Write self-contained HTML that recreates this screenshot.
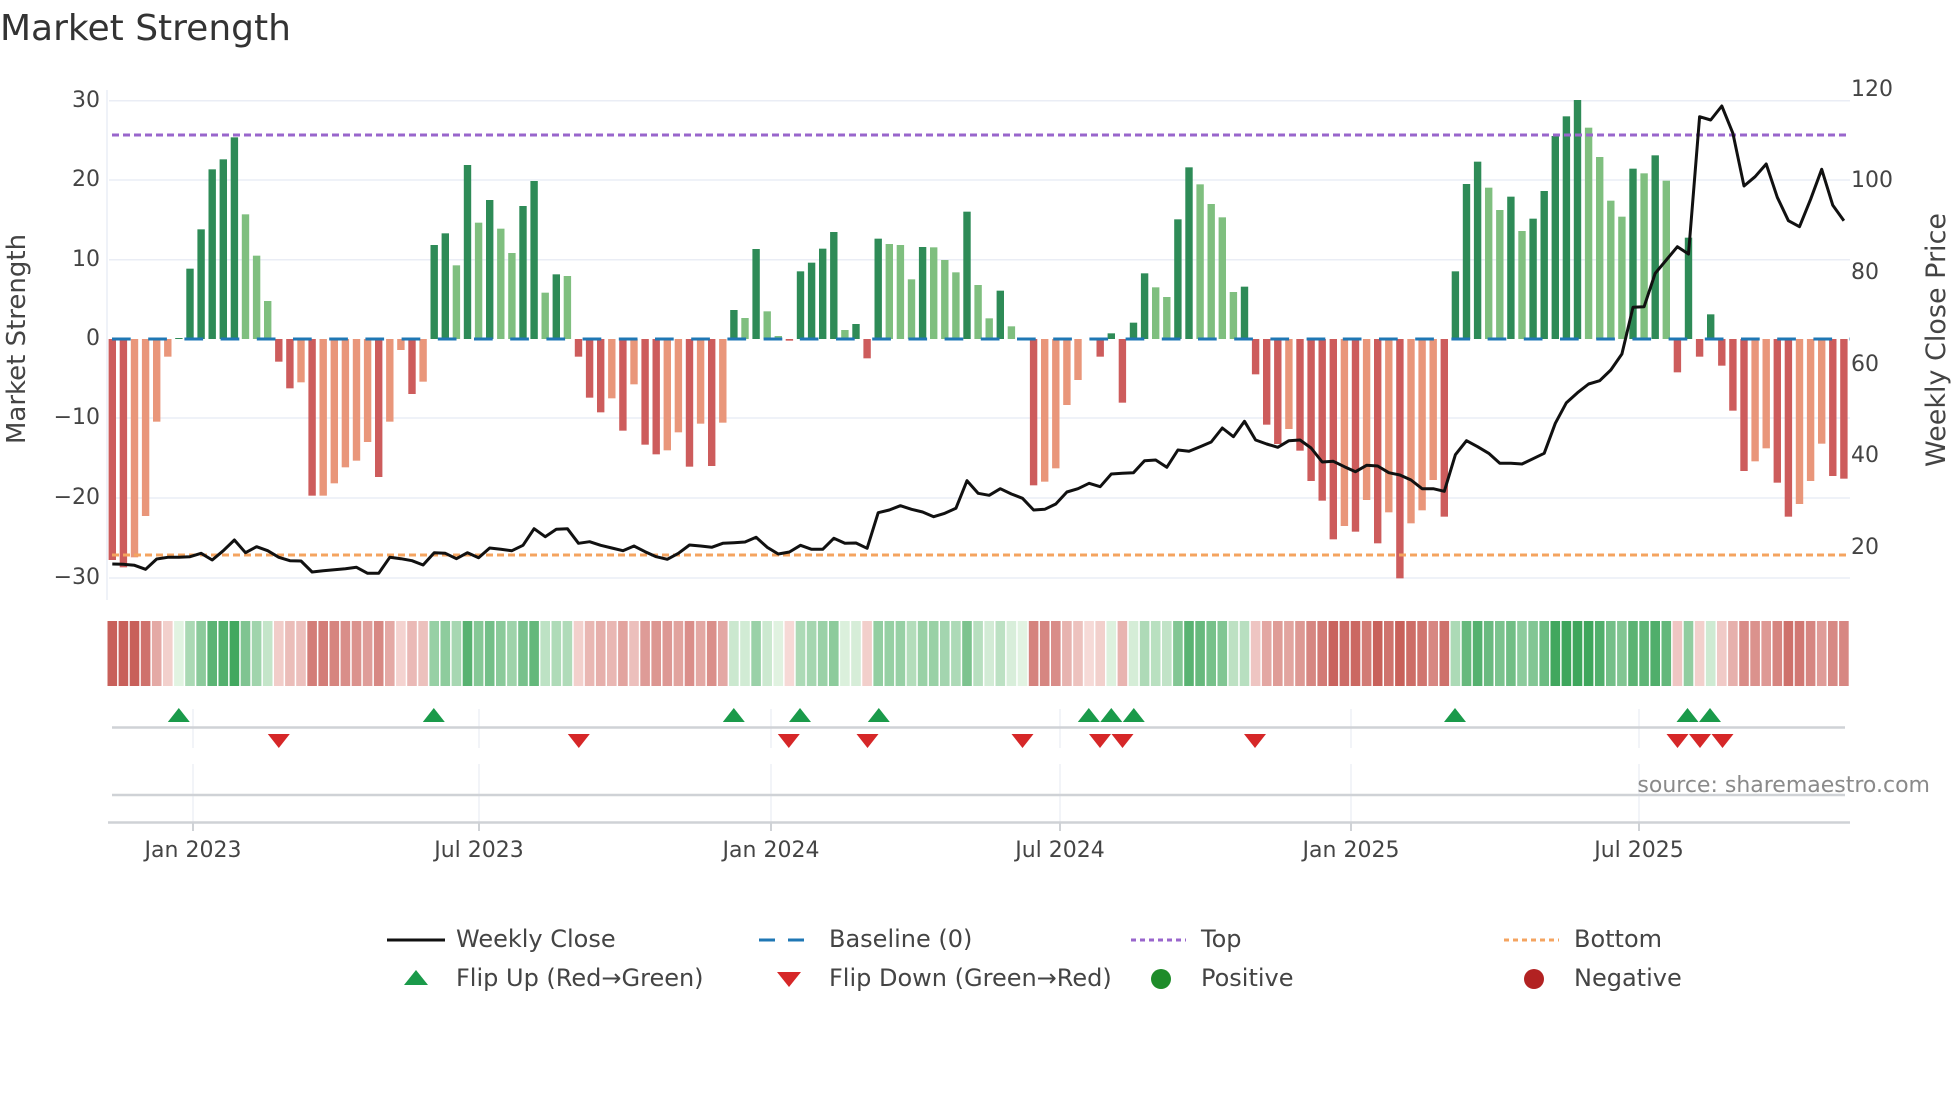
<!DOCTYPE html>
<html><head><meta charset="utf-8"><style>
html,body{margin:0;padding:0;background:#fff;}
svg{display:block;font-family:"DejaVu Sans","Liberation Sans",sans-serif;}
</style></head><body>
<svg id="s" width="1960" height="1102" viewBox="0 0 1960 1102" xmlns="http://www.w3.org/2000/svg">
<rect width="1960" height="1102" fill="#fff"/>
<text x="0" y="40" font-size="36" fill="#333">Market Strength</text>
<g id="grid" stroke="#eaedf5" stroke-width="1.5">
<line x1="109" x2="1850" y1="100.7" y2="100.7"/>
<line x1="109" x2="1850" y1="180" y2="180"/>
<line x1="109" x2="1850" y1="259.7" y2="259.7"/>
<line x1="109" x2="1850" y1="418" y2="418"/>
<line x1="109" x2="1850" y1="498" y2="498"/>
<line x1="109" x2="1850" y1="578" y2="578"/>
<line x1="107" x2="107" y1="90" y2="600"/>
</g>
<g id="bars"></g>
<line x1="112" x2="1850" y1="339" y2="339" stroke="#1f77b4" stroke-width="3" stroke-dasharray="18.7 17.5"/>
<line x1="112" x2="1850" y1="135" y2="135" stroke="#9966cc" stroke-width="3" stroke-dasharray="7 4"/>
<line x1="112" x2="1850" y1="555" y2="555" stroke="#f4a460" stroke-width="3" stroke-dasharray="7 4"/>
<polyline id="price" fill="none" stroke="#111" stroke-width="3" stroke-linejoin="round"/>
<g font-size="22" fill="#444" text-anchor="end" dominant-baseline="middle">
<text x="100" y="101">30</text><text x="100" y="180">20</text><text x="100" y="260">10</text><text x="100" y="339">0</text><text x="100" y="418">−10</text><text x="100" y="498">−20</text><text x="100" y="578">−30</text>
</g>
<g font-size="22" fill="#444" dominant-baseline="middle">
<text x="1851" y="90">120</text><text x="1851" y="181">100</text><text x="1851" y="273">80</text><text x="1851" y="365">60</text><text x="1851" y="456">40</text><text x="1851" y="548">20</text>
</g>
<text transform="translate(25,339) rotate(-90)" font-size="26" fill="#444" text-anchor="middle">Market Strength</text>
<text transform="translate(1945,340) rotate(-90)" font-size="27" fill="#444" text-anchor="middle">Weekly Close Price</text>
<g id="strip"></g>
<g id="vgrid" stroke="#eef0f6" stroke-width="1.5"></g>
<line x1="112" x2="1845" y1="727.5" y2="727.5" stroke="#cfd2d6" stroke-width="2.5"/>
<line x1="112" x2="1845" y1="795" y2="795" stroke="#cfd2d6" stroke-width="2.5"/>
<line x1="108" x2="1850" y1="822.5" y2="822.5" stroke="#cfd2d6" stroke-width="2.5"/>
<g id="marks"></g>
<g font-size="22" fill="#444" text-anchor="middle" dominant-baseline="middle">
<text x="193" y="851">Jan 2023</text><text x="479" y="851">Jul 2023</text><text x="771" y="851">Jan 2024</text><text x="1060" y="851">Jul 2024</text><text x="1351" y="851">Jan 2025</text><text x="1639" y="851">Jul 2025</text>
</g>
<text x="1930" y="792" font-size="22" fill="#8a8a8a" text-anchor="end">source: sharemaestro.com</text>
<g font-size="24" fill="#444" dominant-baseline="middle">
<line x1="387" x2="445" y1="940" y2="940" stroke="#111" stroke-width="3"/>
<text x="456" y="940">Weekly Close</text>
<line x1="759" x2="814" y1="940" y2="940" stroke="#1f77b4" stroke-width="3" stroke-dasharray="16 13"/>
<text x="829" y="940">Baseline (0)</text>
<line x1="1131" x2="1186" y1="940" y2="940" stroke="#9966cc" stroke-width="3" stroke-dasharray="5 4"/>
<text x="1201" y="940">Top</text>
<line x1="1504" x2="1559" y1="940" y2="940" stroke="#f4a460" stroke-width="3" stroke-dasharray="5 4"/>
<text x="1574" y="940">Bottom</text>
<polygon points="404,985 428,985 416,970" fill="#1a9a4a"/>
<text x="456" y="979">Flip Up (Red→Green)</text>
<polygon points="777,972 801,972 789,987" fill="#d62728"/>
<text x="829" y="979">Flip Down (Green→Red)</text>
<circle cx="1161" cy="979" r="10" fill="#1e8c2a"/>
<text x="1201" y="979">Positive</text>
<circle cx="1534" cy="979" r="10" fill="#b22222"/>
<text x="1574" y="979">Negative</text>
</g>
</svg>
<script>
(function(){
var NS="http://www.w3.org/2000/svg";
function el(n,a,p){var e=document.createElementNS(NS,n);for(var k in a)e.setAttribute(k,a[k]);p.appendChild(e);return e;}
var B=[[1440,2],[1462,2],[1432,3],[1308,3],[1025,3],[830,3],[774,0],[566,0],[448,0],[268,0],[238,0],[172,0],[403,1],[527,1],[663,1],[845,2],[925,2],[907,3],[1247,2],[1247,3],[1210,3],[1162,3],[1142,3],[1086,3],[1191,2],[1025,3],[810,3],[942,2],[905,3],[495,0],[460,0],[556,1],[255,0],[428,1],[360,0],[446,1],[519,1],[378,0],[303,0],[638,1],[583,0],[588,1],
[830,2],[953,2],[997,2],[955,3],[1052,2],[913,3],[1094,2],[1123,2],[1111,3],[1057,3],[1160,2],[1031,3],[1158,2],[1028,3],[690,0],[714,1],[507,0],[694,1],[768,1],[782,2],[574,0],[548,0],[506,0],[456,0],[750,1],[732,0],[835,2],[476,0],[492,1],[495,1],[598,1],[501,0],[502,1],[540,1],[577,1],[395,0],[615,1],[715,1],[632,0],[739,1],null,
[1216,2],[1205,3],[1165,3],[975,3],[900,3],null,[830,2],[760,0],[968,2],[728,0],[580,0],[622,1],[651,1],[418,0],[262,0],[313,1],[372,1],[412,1],[636,1],[620,0],[883,2],[1034,2],[1092,2],[1047,3],[1112,2],[1203,2],[1262,2],[1378,2],[1338,3],[1355,2],[1260,3],[1390,2],[1297,3],[1495,2],[1330,3],[1291,3],[1200,3],[1310,2],[574,0],[312,0],[245,0],
[323,1],[390,1],[350,0],[453,1],[416,0],[333,0],[168,0],[109,0],[60,0],[143,1],[231,1],[362,1],[410,1],[266,0],[280,1],[226,0],[302,1],[877,2],[473,0],[830,2],[703,0],[857,2],[992,2],[1173,2],[1144,3],[1105,3],[1208,2],[1310,2],[1272,3],[1203,3],[1091,3],[1188,2],[1196,2]];
var P=[1452,1453,1456,1468,1437,1432,1432,1430,1420,1440,1412,1380,1418,1400,1412,1432,1442,1443,1476,1472,1469,1466,1462,1480,1480,1432,1436,1442,1455,1418,1420,1436,1418,1433,1404,1408,1412,1396,1346,1370,1348,1346,
1390,1385,1396,1404,1412,1398,1415,1430,1438,1420,1395,1398,1402,1390,1388,1386,1372,1402,1422,1416,1396,1408,1408,1375,1390,1389,1405,1298,1290,1277,1288,1296,1310,1300,1285,1202,1240,1246,1226,1242,1255,
1290,1288,1272,1236,1226,1210,1220,1182,1180,1178,1142,1140,1162,1110,1114,1100,1086,1044,1070,1024,1080,1092,1102,1082,1080,1104,1146,1144,1160,1175,1156,1158,1178,1185,1200,1226,1226,1234,1124,1082,1100,
1120,1150,1150,1152,1136,1120,1030,968,938,912,902,870,822,682,680,580,540,500,522,110,120,78,160,318,290,252,352,422,440,358,268,376,422];
var C=["#2e8b57","#7fbf7f","#cd5c5c","#e9967a"];
var bars=document.getElementById("bars"),strip=document.getElementById("strip");
var pitch=11.1,x0=112.3;
function mix(a,b,t){return "rgb("+a.map(function(v,i){return Math.round(v+(b[i]-v)*t)}).join(",")+")";}
for(var i=0;i<B.length;i++){
 var x=x0+pitch*i,b=B[i],v=0;
 if(b){var zy=b[0];var y1=80+Math.min(zy,777)/3,y2=80+Math.max(zy,777)/3;
  el("rect",{x:x-3.7,y:y1,width:7.4,height:Math.max(y2-y1,0.6),fill:C[b[1]]},bars);
  v=(777-zy)/3/7.93;}
 var neg=b?(b[1]>=2):(i>0&&B[i-1]&&B[i-1][1]>=2);
 var t=Math.min(Math.abs(v)/26,1);
 var col=neg?mix([246,218,215],[200,96,90],t):mix([226,243,226],[62,166,92],t);
 el("rect",{x:x-4.8,y:621,width:9.6,height:65,fill:col},strip);
}
var pts=[];for(var j=0;j<P.length;j++)pts.push((x0+pitch*j).toFixed(1)+","+(80+P[j]/3).toFixed(1));
document.getElementById("price").setAttribute("points",pts.join(" "));
var vg=document.getElementById("vgrid");
[193,479,771,1060,1351,1639].forEach(function(x){
 el("line",{x1:x,x2:x,y1:709,y2:748},vg);el("line",{x1:x,x2:x,y1:764,y2:822},vg);
 el("line",{x1:x,x2:x,y1:822,y2:831,stroke:"#cfd2d6","stroke-width":2},vg);});
var m=document.getElementById("marks");
[178.8,433.8,733.8,800,878.8,1088.8,1111.3,1133.8,1455,1687.5,1710].forEach(function(x){
 el("polygon",{points:(x-11)+",722 "+(x+11)+",722 "+x+",708",fill:"#1a9a4a"},m);});
[278.8,578.8,788.8,867.5,1022.5,1100,1122.5,1255,1677.5,1700,1722.5].forEach(function(x){
 el("polygon",{points:(x-11)+",734 "+(x+11)+",734 "+x+",748",fill:"#d62728"},m);});
})();
</script>
</body></html>
